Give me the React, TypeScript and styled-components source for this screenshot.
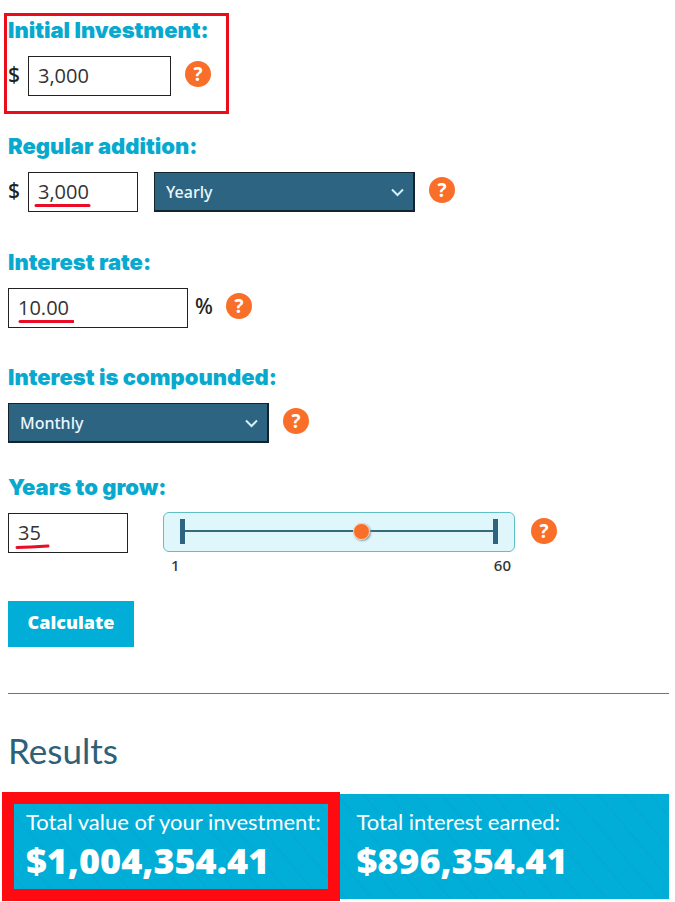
import React, { useState } from "react";
import styled, { createGlobalStyle } from "styled-components";

const GlobalStyle = createGlobalStyle`
  *, *::before, *::after { box-sizing: border-box; }
  body { margin: 0; background: #fff; color: #222; font-family: "Open Sans", "Noto Sans", sans-serif; }
  input, select, button { font-family: inherit; margin: 0; border-radius: 0; }
`;

const Page = styled.main`
  padding: 16px 6px 3px 8px;
`;

const Field = styled.div<{ $after?: number }>`
  position: relative;
  margin-bottom: ${(p) => p.$after ?? 36}px;
`;

const Label = styled.label`
  display: block;
  width: fit-content;
  margin-bottom: 12px;
  font: 900 22px/28px Inter, sans-serif;
  color: #08a9cf;
`;

const Controls = styled.div`
  display: flex;
  align-items: flex-start;
`;

const Unit = styled.span<{ $after?: boolean }>`
  flex: none;
  width: ${(p) => (p.$after ? 38 : 20)}px;
  padding-left: ${(p) => (p.$after ? 7 : 0)}px;
  font-family: "Noto Sans", sans-serif;
  font-size: 21px;
  font-weight: 500;
  line-height: 36px;
`;

const InputWrap = styled.div<{ $width: number }>`
  position: relative;
  flex: 0 1 ${(p) => p.$width}px;
  min-width: 0;
`;

const TextInput = styled.input`
  display: block;
  width: 100%;
  height: 40px;
  padding: 0 9px 2px;
  border: 1px solid #222;
  background: #fff;
  color: #333;
  font-size: 20px;
`;

const Underline = styled.svg`
  position: absolute;
  left: 6px;
  bottom: 3px;
  width: 60px;
  height: 8px;
  fill: none;
  stroke: #ea0c24;
  stroke-width: 3;
  stroke-linecap: round;
  pointer-events: none;
`;

const SelectWrap = styled.div<{ $indent?: boolean }>`
  position: relative;
  flex: 0 1 261px;
  min-width: 0;
  margin-left: ${(p) => (p.$indent ? 16 : 0)}px;
`;

const Select = styled.select`
  display: block;
  appearance: none;
  width: 100%;
  height: 40px;
  padding: 0 36px 0 11px;
  border: 1px solid #14242e;
  border-width: 1px 2px 2px 1px;
  background: #2d6482;
  color: #eaf7fd;
  font-family: "Noto Sans", sans-serif;
  font-size: 16px;
  font-weight: 500;
`;

const Chevron = styled.svg`
  position: absolute;
  right: 11px;
  top: 16px;
  width: 13px;
  height: 9px;
  fill: none;
  stroke: #d3eff8;
  stroke-width: 2;
  pointer-events: none;
`;

const Help = styled.button`
  flex: none;
  width: 26px;
  height: 26px;
  margin: 5px 0 0 14px;
  padding: 0;
  border: 0;
  && { border-radius: 50%; }
  background: #f96e28;
  color: #fff;
  font-size: 19px;
  font-weight: 700;
  line-height: 26px;
  text-align: center;
`;

const UnitHelp = styled(Help)`
  margin-left: 0;
`;

const SliderColumn = styled.div`
  flex: 0 1 352px;
  min-width: 0;
  margin: -1px 2px 0 35px;
`;

const SliderBox = styled.div`
  height: 40px;
  padding: 0 16px 2px;
  border: 1px solid #5fbfc4;
  border-radius: 6px;
  background: #dff6fb;
  display: flex;
  align-items: center;
`;

const Slider = styled.input`
  appearance: none;
  width: 100%;
  height: 25px;
  background:
    linear-gradient(#2d6482, #2d6482) left / 5px 100% no-repeat,
    linear-gradient(#2d6482, #2d6482) right / 5px 100% no-repeat,
    linear-gradient(#356a7d, #356a7d) center / 100% 2px no-repeat;

  &::-webkit-slider-thumb {
    appearance: none;
    width: 17px;
    height: 17px;
    border: 1px solid #fbd9c4;
    border-radius: 50%;
    background: #f96e28;
    box-shadow: 1px 1px 2px #8a9ca0;
  }
`;

const Scale = styled.div`
  display: flex;
  justify-content: space-between;
  padding: 3px 4px 2px 8px;
  font-family: "Noto Sans", sans-serif;
  font-size: 15px;
  font-weight: 500;
  line-height: 20px;
  color: #333;
`;

const Calculate = styled.button`
  display: block;
  width: 126px;
  height: 46px;
  padding: 0 0 4px;
  border: 0;
  background: #00aed8;
  color: #fff;
  font-size: 18px;
  font-weight: 800;
`;

const Divider = styled.hr`
  height: 1px;
  margin: 46px 0 36px;
  border: 0;
  background: #5c7b82;
`;

const ResultsTitle = styled.h2`
  margin: 0 0 24px;
  font: 400 35px/40px Lato, sans-serif;
  color: #2f6079;
`;

const Results = styled.section`
  display: grid;
  grid-template-columns: repeat(2, 1fr);
  background: repeating-linear-gradient(50deg, #00aed8 0 18px, #06a8d3 19px 20px);
`;

const Result = styled.div`
  position: relative;
  height: 105px;
  padding: 13px 17px 0 18px;
  color: #fff;
`;

const ResultLabel = styled.div`
  font: 400 22px/30px Lato, sans-serif;
  white-space: nowrap;
`;

const ResultValue = styled.div`
  margin-top: 2px;
  font-size: 36px;
  font-weight: 800;
  line-height: 44px;
`;

const FieldFrame = styled.div`
  position: absolute;
  top: -3px;
  left: -4px;
  width: 225px;
  height: 101px;
  border: 3px solid #ea0c18;
  pointer-events: none;
`;

const ResultFrame = styled.div`
  position: absolute;
  inset: -2px -1px -2px -6px;
  border: 12px solid #ff0a10;
  pointer-events: none;
`;

function HelpButton({ topic }: { topic: string }) {
  return <Help type="button" aria-label={`Help: ${topic}`}>?</Help>;
}

function Dropdown({ id, label, options, indent }: { id: string; label?: string; options: string[]; indent?: boolean }) {
  return (
    <SelectWrap $indent={indent}>
      <Select id={id} aria-label={label}>
        {options.map((o) => <option key={o}>{o}</option>)}
      </Select>
      <Chevron viewBox="0 0 13 9" aria-hidden="true"><path d="M1 1.5 6.5 7 12 1.5" /></Chevron>
    </SelectWrap>
  );
}

export default function App() {
  const [years, setYears] = useState("35");
  return (
    <>
      <GlobalStyle />
      <Page>
        <Field>
          <Label htmlFor="initial">Initial Investment:</Label>
          <Controls>
            <Unit>$</Unit>
            <InputWrap $width={143}><TextInput id="initial" defaultValue="3,000" /></InputWrap>
            <HelpButton topic="initial investment" />
          </Controls>
          <FieldFrame />
        </Field>

        <Field>
          <Label htmlFor="addition">Regular addition:</Label>
          <Controls>
            <Unit>$</Unit>
            <InputWrap $width={110}>
              <TextInput id="addition" defaultValue="3,000" />
              <Underline viewBox="0 0 60 8"><path d="M2 4.5H55" /></Underline>
            </InputWrap>
            <Dropdown id="frequency" label="Addition frequency" options={["Yearly", "Monthly"]} indent />
            <HelpButton topic="regular addition" />
          </Controls>
        </Field>

        <Field $after={35}>
          <Label htmlFor="rate">Interest rate:</Label>
          <Controls>
            <InputWrap $width={180}>
              <TextInput id="rate" defaultValue="10.00" />
              <Underline viewBox="0 0 60 8"><path d="M6 4.5H59" /></Underline>
            </InputWrap>
            <Unit $after>%</Unit>
            <UnitHelp type="button" aria-label="Help: interest rate">?</UnitHelp>
          </Controls>
        </Field>

        <Field $after={30}>
          <Label htmlFor="compound">Interest is compounded:</Label>
          <Controls>
            <Dropdown id="compound" options={["Monthly", "Yearly"]} />
            <HelpButton topic="compounding" />
          </Controls>
        </Field>

        <Field $after={24}>
          <Label htmlFor="years">Years to grow:</Label>
          <Controls>
            <InputWrap $width={120}>
              <TextInput id="years" value={years} onChange={(e) => setYears(e.target.value)} />
              <Underline viewBox="0 0 60 8"><path d="M3 5.5Q16 5 34 4" /></Underline>
            </InputWrap>
            <SliderColumn>
              <SliderBox>
                <Slider type="range" aria-label="Years to grow" min={1} max={60} value={years} onChange={(e) => setYears(e.target.value)} />
              </SliderBox>
              <Scale><span>1</span><span>60</span></Scale>
            </SliderColumn>
            <HelpButton topic="years to grow" />
          </Controls>
        </Field>

        <Calculate type="button">Calculate</Calculate>
        <Divider />
        <ResultsTitle>Results</ResultsTitle>
        <Results>
          <Result>
            <ResultLabel>Total value of your investment:</ResultLabel>
            <ResultValue>$1,004,354.41</ResultValue>
            <ResultFrame />
          </Result>
          <Result>
            <ResultLabel>Total interest earned:</ResultLabel>
            <ResultValue>$896,354.41</ResultValue>
          </Result>
        </Results>
      </Page>
    </>
  );
}
